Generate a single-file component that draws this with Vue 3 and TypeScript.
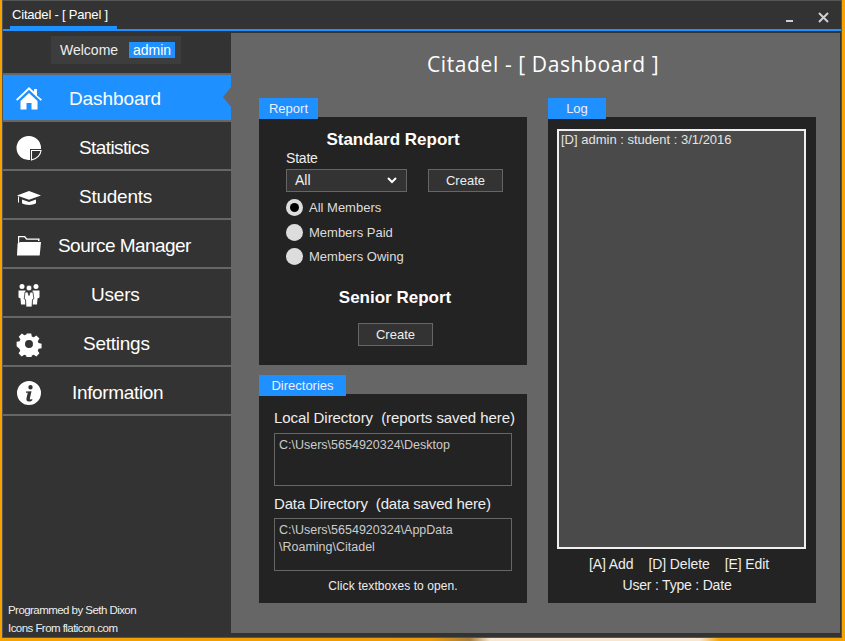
<script setup lang="ts">
const navItems = [
  { label: "Dashboard", icon: "home", left: 27, spacing: -0.1, active: true },
  { label: "Statistics", icon: "pie", left: 37, spacing: -0.6 },
  { label: "Students", icon: "cap", left: 37, spacing: -0.25 },
  { label: "Source Manager", icon: "folder", left: 16, spacing: -0.55 },
  { label: "Users", icon: "users", left: 49, spacing: -0.2 },
  { label: "Settings", icon: "gear", left: 41, spacing: -0.25 },
  { label: "Information", icon: "info", left: 30, spacing: -0.35 },
];
</script>

<template>
  <div class="desktop">
    <div class="window">
      <header class="titlebar">
        <div class="title-tab">Citadel - [ Panel ]</div>
        <div class="controls">
          <span class="min"></span>
          <svg width="11" height="11" viewBox="0 0 11 11" stroke="#d0d0d0" stroke-width="2" fill="none">
            <path d="M1 1l9 9M10 1l-9 9" />
          </svg>
        </div>
      </header>

      <div class="body">
        <aside class="sidebar">
          <div class="welcome-row">
            <div class="welcome">Welcome <span class="who">admin</span></div>
          </div>
          <nav class="nav">
            <div v-for="item in navItems" :key="item.label" class="nav-item" :class="{ active: item.active }">
              <svg class="nav-icon" width="26" height="26" viewBox="0 0 26 26" fill="#fff">
                <template v-if="item.icon === 'home'">
                  <path d="M0 13.500 13 1l5 4.800V3h3v6.500l5 4-1.300 1.300L13 3.800 1.300 14.800z" />
                  <path d="M4.500 15 13 7l8.500 8v8.500h-6V17h-5v6.500h-6z" />
                </template>
                <template v-else-if="item.icon === 'pie'">
                  <path d="M13 1a12 12 0 0 1 12 12v1H14v10.900A12 12 0 1 1 13 1z" />
                  <path d="M15.500 15.500H25c-.2 2-1 4-2.500 5.700-1.700 1.800-4 3.300-7 3.800z" fill="none" stroke="#fff" stroke-width="1.100" />
                </template>
                <template v-else-if="item.icon === 'cap'">
                  <path d="M13 7 25 11.500l-12 4.300L1 11.500z" />
                  <path d="M6 15.500v3.800c2 1.200 4.500 1.700 7 1.700s5-.5 7-1.700v-3.800l-7 2.500z" />
                  <path d="M2 12.500h1v6H2z" />
                </template>
                <template v-else-if="item.icon === 'folder'">
                  <path d="M2 3h7l2 2.500h12.500V8H22V6.800H10.300L8.300 4.300H3.200V18L2 21z" />
                  <path d="M1 22.500 1.600 10.500 4.500 9H25l-1.300 13.500z" />
                </template>
                <template v-else-if="item.icon === 'users'">
                  <circle cx="6" cy="4.500" r="2.500" />
                  <circle cx="20" cy="4.500" r="2.500" />
                  <path d="M2.500 8.500h7V22.500H5l-.5-6-2-1z" />
                  <path d="M16.500 8.500h7v7l-2 1-.5 6h-4.500z" />
                  <circle cx="13" cy="6" r="2.900" stroke="#333" stroke-width=".8" />
                  <path d="M9 10h2.800L13 13.500l1.200-3.500H17l.8 7-1.300.5-.5 7.500h-6l-.5-7.500-1.300-.5z" stroke="#333" stroke-width=".8" />
                </template>
                <template v-else-if="item.icon === 'gear'">
                  <path fill-rule="evenodd" d="M10.500 1h5l.7 3.400 2.200.9 2.900-1.900 3.500 3.500-1.900 2.900.9 2.200 3.400.7v5l-3.400.7-.9 2.200 1.900 2.900-3.500 3.500-2.900-1.900-2.200.9-.7 3.400h-5l-.7-3.400-2.200-.9-2.900 1.900-3.500-3.500 1.900-2.900-.9-2.200L-1 15.500v-5l3.400-.7.9-2.200L1.400 4.700l3.500-3.500 2.900 1.900 2.200-.9zM13 8.500a4.500 4.500 0 1 0 0 9 4.500 4.500 0 0 0 0-9z" transform="translate(1.500 1.500) scale(.885)" />
                </template>
                <template v-else>
                  <path fill-rule="evenodd" d="M13 1a12 12 0 1 1 0 24 12 12 0 0 1 0-24zM14.500 5a2.200 2.200 0 1 0 0 4.400 2.200 2.200 0 0 0 0-4.400zM10 11.500v1.300h1.800L10.500 18c-.5 2.500.5 3.500 2.500 3.500 1.500 0 2.700-.6 3.300-1.300v-1.100l-1.800.4c-.6 0-.8-.4-.6-1.200l1.600-7z" />
                </template>
              </svg>
              <span class="nav-label" :style="{ marginLeft: item.left + 'px', letterSpacing: item.spacing + 'px' }">{{ item.label }}</span>
            </div>
          </nav>
          <div class="credits">
            <div>Programmed by Seth Dixon</div>
            <div>Icons From flaticon.com</div>
          </div>
        </aside>

        <main class="content">
          <h1 class="page-title">Citadel - [ Dashboard ]</h1>
          <div class="columns">
            <div class="col">
              <section class="group">
                <div class="tab report-tab">Report</div>
                <div class="panel report">
                  <h2>Standard Report</h2>
                  <div class="state-label">State</div>
                  <div class="state-row">
                    <div class="select">
                      <span>All</span>
                      <svg width="10" height="7" viewBox="0 0 10 7" fill="none" stroke="#fff" stroke-width="2">
                        <path d="M1 1l4 4 4-4" />
                      </svg>
                    </div>
                    <div class="btn">Create</div>
                  </div>
                  <div class="radio first"><span class="dot on"></span>All Members</div>
                  <div class="radio second"><span class="dot"></span>Members Paid</div>
                  <div class="radio third"><span class="dot"></span>Members Owing</div>
                  <h2 class="senior">Senior Report</h2>
                  <div class="btn center">Create</div>
                </div>
              </section>

              <section class="group">
                <div class="tab dir-tab">Directories</div>
                <div class="panel dirs">
                  <div class="dir-label first-label">Local Directory&nbsp; (reports saved here)</div>
                  <div class="path">C:\Users\5654920324\Desktop</div>
                  <div class="dir-label second-label">Data Directory&nbsp; (data saved here)</div>
                  <div class="path">C:\Users\5654920324\AppData<br />\Roaming\Citadel</div>
                  <div class="hint">Click textboxes to open.</div>
                </div>
              </section>
            </div>

            <section class="group log-group">
              <div class="tab log-tab">Log</div>
              <div class="panel log">
                <div class="log-box">[D] admin : student : 3/1/2016</div>
                <div class="legend"><span>[A] Add</span><span>[D] Delete</span><span>[E] Edit</span></div>
                <div class="legend-sub">User : Type : Date</div>
              </div>
            </section>
          </div>
        </main>
      </div>
    </div>
  </div>
</template>

<style>
body {
  margin: 0;
  overflow: hidden;
}
</style>

<style scoped>
.desktop {
  width: 845px;
  height: 641px;
  box-sizing: border-box;
  padding: 0 3px 3px 2px;
  background: linear-gradient(90deg, #f5a300 0, #ee9a08 430px, #a8803c 470px, #f7e6d0 490px, #f7e6d0 700px, #f5a300 720px);
  font-family: "Liberation Sans", Arial, sans-serif;
  color: #fff;
}
.window {
  height: 100%;
  box-sizing: border-box;
  display: flex;
  flex-direction: column;
  background: #333;
  border: 1px solid #555;
}
.titlebar {
  height: 30px;
  box-sizing: border-box;
  flex: none;
  display: flex;
  justify-content: space-between;
  background: #333;
  border-bottom: 2px solid #1e90ff;
}
.title-tab {
  margin-left: 7px;
  width: 107px;
  height: 28px;
  box-sizing: border-box;
  padding: 6px 0 0 2px;
  font-size: 13px;
  line-height: 15px;
  letter-spacing: -0.2px;
  border-bottom: 3px solid #1e90ff;
}
.controls {
  display: flex;
  align-items: flex-start;
  gap: 25px;
  padding: 11px 12px 0 0;
}
.min {
  width: 7px;
  height: 2px;
  margin-top: 8px;
  background: #d0d0d0;
}
.body {
  flex: 1;
  display: flex;
  min-height: 0;
}
.sidebar {
  width: 228px;
  flex: none;
  display: flex;
  flex-direction: column;
}
.welcome-row {
  height: 42px;
  box-sizing: border-box;
  padding: 5px 0 0 48px;
}
.welcome {
  width: 130px;
  height: 28px;
  box-sizing: border-box;
  padding: 6px 0 0 9px;
  background: #3d3d3d;
  font-size: 14px;
  line-height: 16px;
  color: #eee;
}
.who {
  display: inline-block;
  margin-left: 7px;
  padding: 0 4px;
  background: #1e90ff;
  color: #fff;
}
.nav {
  border-top: 2px solid #666;
}
.nav-item {
  position: relative;
  height: 49px;
  box-sizing: border-box;
  padding-top: 5px;
  display: flex;
  align-items: center;
  border-bottom: 2px solid #666;
  background: #333;
}
.nav-item.active {
  height: 47px;
  padding-top: 3px;
  background: #1e90ff;
}
.nav-item.active::after {
  content: "";
  position: absolute;
  right: 0;
  top: 12px;
  border: 10px solid transparent;
  border-left: 0;
  border-right: 8px solid #666;
}
.nav-icon {
  flex: none;
  margin-left: 13px;
}
.nav-label {
  font-size: 19px;
  white-space: nowrap;
}
.credits {
  margin-top: auto;
  padding: 0 0 0 5px;
  font-size: 11.500px;
  line-height: 18px;
  letter-spacing: -0.55px;
  color: #eee;
}
.content {
  flex: 1;
  margin: 2px 1px 4px 0;
  padding: 0 0 0 28px;
  background: #666;
  min-width: 0;
}
.page-title {
  margin: 0;
  height: 65px;
  box-sizing: border-box;
  padding-top: 18px;
  padding-left: 168px;
  font-family: "Open Sans", "Liberation Sans", sans-serif;
  font-weight: 400;
  font-size: 21px;
  line-height: 26px;
  letter-spacing: 0.6px;
  white-space: nowrap;
}
.columns {
  display: flex;
  gap: 21px;
  height: 505px;
}
.col {
  width: 268px;
  display: flex;
  flex-direction: column;
  gap: 10px;
}
.group {
  display: flex;
  flex-direction: column;
}
.log-group {
  width: 268px;
}
.tab {
  position: relative;
  height: 21px;
  flex: none;
  margin-bottom: -2px;
  background: #1e90ff;
  font-size: 13px;
  line-height: 21px;
  text-align: center;
  color: #eef;
}
.report-tab { width: 59px; }
.dir-tab { width: 87px; }
.log-tab { width: 58px; }
.panel {
  background: #232323;
  box-sizing: border-box;
}
.report {
  height: 248px;
  padding: 13px 24px 0 27px;
}
.report h2 {
  margin: 0;
  padding-right: 3px;
  text-align: center;
  font-size: 17px;
  line-height: 19px;
  font-weight: 700;
}
.state-label {
  font-size: 14px;
  line-height: 18px;
  letter-spacing: -0.2px;
  color: #eee;
}
.state-row {
  display: flex;
  justify-content: space-between;
  margin-top: 2px;
}
.select, .btn {
  box-sizing: border-box;
  height: 23px;
  border: 1px solid #666;
  background: #333;
  font-size: 13px;
  line-height: 21px;
  color: #eee;
}
.select {
  width: 121px;
  padding: 0 9px 0 8px;
  display: flex;
  align-items: center;
  justify-content: space-between;
  font-size: 14px;
}
.btn {
  width: 75px;
  text-align: center;
}
.btn.center {
  margin: 16px 0 0 72px;
}
.radio {
  display: flex;
  align-items: center;
  gap: 6px;
  height: 18px;
  font-size: 13px;
  color: #ddd;
}
.radio.first { margin-top: 6px; }
.radio.second { margin-top: 7px; }
.radio.third { margin-top: 6px; }
.dot {
  width: 17px;
  height: 17px;
  border-radius: 50%;
  background: #ddd;
  position: relative;
}
.dot.on::after {
  content: "";
  position: absolute;
  inset: 4px;
  border-radius: 50%;
  background: #000;
}
.report h2.senior {
  margin-top: 23px;
  padding-left: 4px;
}
.dirs {
  height: 209px;
  padding: 15px 15px 0;
}
.dir-label {
  font-size: 15px;
  line-height: 18px;
  letter-spacing: -0.15px;
  white-space: nowrap;
  color: #eee;
}
.first-label {
  letter-spacing: -0.07px;
}
.second-label {
  margin-top: 9px;
  margin-bottom: -1px;
}
.path {
  width: 238px;
  height: 53px;
  box-sizing: border-box;
  margin-top: 6px;
  padding: 3px 4px;
  border: 1px solid #666;
  font-size: 12.500px;
  line-height: 17px;
  white-space: nowrap;
  color: #ccc;
}
.hint {
  margin-top: 8px;
  text-align: center;
  font-size: 12px;
  line-height: 15px;
  letter-spacing: 0.08px;
  color: #eee;
}
.log {
  height: 486px;
  padding: 12px 9px 0;
}
.log-box {
  height: 420px;
  width: 249px;
  box-sizing: border-box;
  padding: 0 2px;
  background: #4a4a4a;
  border: 2px solid #f0f0f0;
  font-size: 13px;
  line-height: 18px;
  color: #e4e4e4;
}
.legend {
  display: flex;
  justify-content: center;
  gap: 15px;
  margin-top: 7px;
  padding-right: 6px;
  font-size: 14px;
  line-height: 17px;
  letter-spacing: -0.1px;
  color: #eee;
}
.legend-sub {
  margin-top: 4px;
  padding-right: 10px;
  text-align: center;
  font-size: 14px;
  line-height: 17px;
  letter-spacing: -0.2px;
  color: #eee;
}
</style>
